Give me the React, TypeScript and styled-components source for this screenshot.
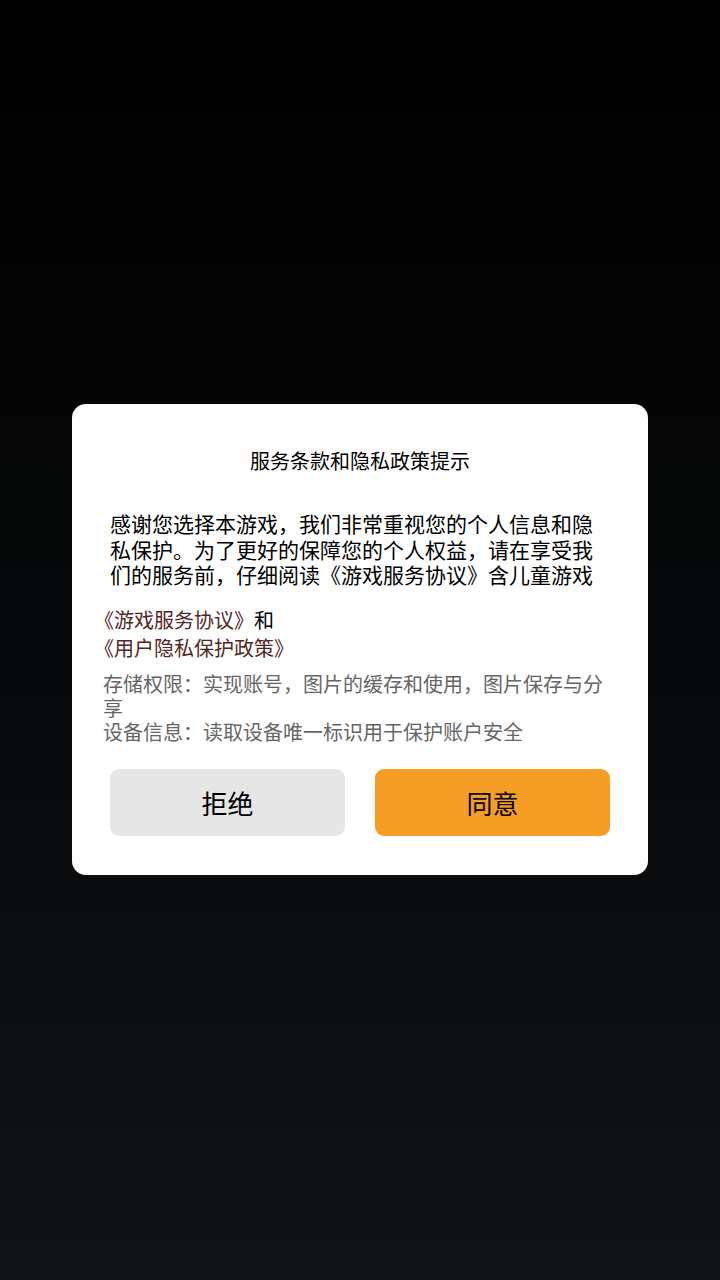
import React from "react";
import styled, { createGlobalStyle } from "styled-components";

const GlobalStyle = createGlobalStyle`
    html, body {
        margin: 0;
        padding: 0;
    }
    body {
        font-family: "Noto Sans CJK SC", "Noto Sans", sans-serif;
    }
    * {
        box-sizing: border-box;
    }
`;

const Screen = styled.div`
    width: 720px;
    height: 1280px;
    background: linear-gradient(180deg, #000000 0%, #070809 50%, #111316 100%);
    display: flex;
    justify-content: center;
    padding-top: 404px;
`;

const Dialog = styled.div`
    width: 576px;
    height: 471px;
    background: #fff;
    border-radius: 14px;
    padding: 42px 20px 0;
    display: flex;
    flex-direction: column;
`;

const Title = styled.h2`
    margin: 0;
    text-align: center;
    font-size: 20px;
    font-weight: 400;
    line-height: 30px;
    color: #000;
`;

const Intro = styled.p`
    margin: 35px 0 0;
    padding: 0 18px;
    font-size: 21px;
    line-height: 25.5px;
    color: #000;
`;

const Links = styled.div`
    margin-top: 18px;
    padding-left: 2px;
    font-size: 20px;
    line-height: 28px;
    color: #000;
`;

const LinkText = styled.a`
    color: #552626;
    text-decoration: none;
`;

const Permissions = styled.div`
    margin-top: 10px;
    padding: 0 20px 0 11px;
    font-size: 20px;
    line-height: 24px;
    color: #666;
`;

const ButtonRow = styled.div`
    margin-top: 25px;
    padding: 0 18px;
    display: flex;
    justify-content: space-between;
`;

const ActionButton = styled.button<{ $primary?: boolean }>`
    width: 235px;
    height: 67px;
    border: none;
    border-radius: 9px;
    background: ${(p) => (p.$primary ? "#f59d25" : "#e6e6e6")};
    color: #000;
    font-family: "Noto Sans CJK SC", sans-serif;
    font-size: 26px;
    cursor: pointer;
`;

export default function App() {
    return (
        <>
            <GlobalStyle />
            <Screen>
                <Dialog>
                    <Title>服务条款和隐私政策提示</Title>
                    <Intro>
                        感谢您选择本游戏，我们非常重视您的个人信息和隐私保护。为了更好的保障您的个人权益，请在享受我们的服务前，仔细阅读《游戏服务协议》含儿童游戏
                    </Intro>
                    <Links>
                        <LinkText href="#">《游戏服务协议》</LinkText>和
                        <br />
                        <LinkText href="#">《用户隐私保护政策》</LinkText>
                    </Links>
                    <Permissions>
                        <div>存储权限：实现账号，图片的缓存和使用，图片保存与分享</div>
                        <div>设备信息：读取设备唯一标识用于保护账户安全</div>
                    </Permissions>
                    <ButtonRow>
                        <ActionButton>拒绝</ActionButton>
                        <ActionButton $primary>同意</ActionButton>
                    </ButtonRow>
                </Dialog>
            </Screen>
        </>
    );
}
